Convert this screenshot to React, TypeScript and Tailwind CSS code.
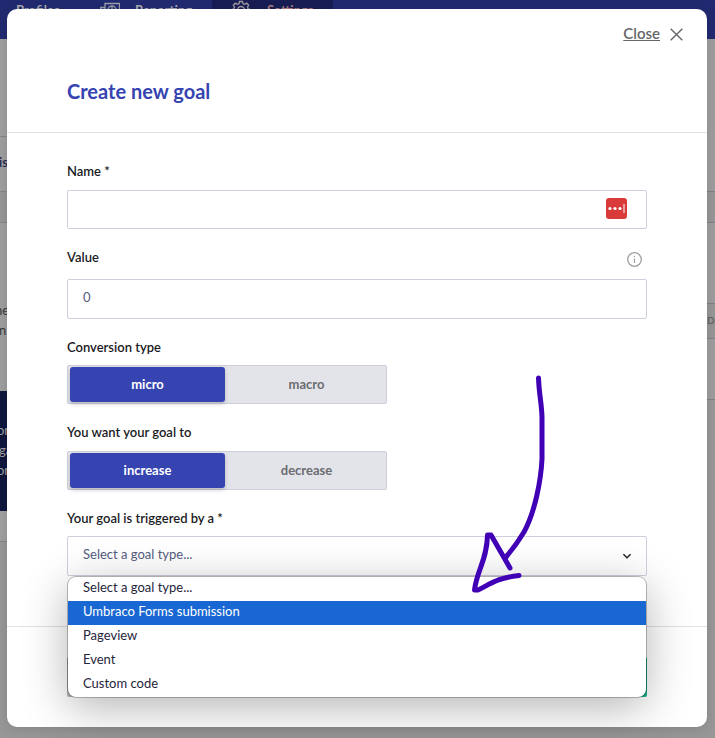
import React from "react";

const options = ["Select a goal type...", "Umbraco Forms submission", "Pageview", "Event", "Custom code"];

function Label({ children }: { children: React.ReactNode }) {
  return <span className="text-[13px] leading-5 font-semibold text-[#1b1b1f]">{children}</span>;
}

function Toggle({ on, off }: { on: string; off: string }) {
  return (
    <div className="flex h-[39px] w-80 shrink-0 rounded-[2px] border border-[#cfcfdc] bg-[#e3e4e9] p-px text-[13px] font-bold">
      <div className="ml-px flex w-[155px] items-center justify-center rounded-[3px] bg-[#3544b1] text-white shadow-[0_2px_4px_rgba(0,0,0,0.2)]">
        {on}
      </div>
      <div className="flex flex-1 items-center justify-center pl-[3px] text-[#6c6c70]">{off}</div>
    </div>
  );
}

function Backdrop() {
  return (
    <div className="h-full w-full bg-[#979797]">
      <div className="flex h-[39px] bg-[#212a70] text-[13px] leading-5 font-bold text-[#a8a8b0]">
        <span className="ml-4 w-[84px]">Profiles</span>
        <svg className="h-5 w-5" viewBox="0 0 20 20" fill="none" stroke="#9b9da9" strokeWidth="1.3">
          <path d="M5 13V3.500H19.500V15M.7 14V7.500H5" />
          <circle cx="12" cy="10" r="4" />
          <path d="M12 6v4h4" />
        </svg>
        <span className="ml-[15px] w-[77px]">Reporting</span>
        <div className="flex w-[121px] bg-[#181e53] text-[#b07c80]">
          <svg className="ml-5 h-5 w-[18px]" viewBox="0 0 18 20" fill="none" stroke="#a09ba3" strokeWidth="1.3">
            <path d="M7.500 1.500h3l.5 2.200 1.800.7 1.900-1.200 2 2-1.200 1.900.7 1.800 1.300.4v3h-17v-3l1.300-.4.700-1.800-1.200-1.900 2-2 1.900 1.200 1.800-.7z" />
            <circle cx="9" cy="10" r="3.500" />
          </svg>
          <span className="ml-[17px]">Settings</span>
        </div>
      </div>
      <div className="flex h-[699px] justify-between">
        <div className="flex w-[7px] flex-col text-[13px] leading-5 whitespace-nowrap text-[#393939]">
          <div className="h-[97px] w-full bg-[#9f9f9f]" />
          <div className="flex h-[55px] w-full items-center border-t border-[#83838b] bg-[#9e9e9e] pb-1 font-semibold text-[#22264e]">
            <span className="-ml-px">is</span>
          </div>
          <div className="h-8 w-full border-y border-[#83838b] bg-[#969696]" />
          <div className="flex h-[168px] w-full flex-col bg-[#9e9e9e] pt-[77px]">
            <span className="-ml-[5px]">ne</span>
            <span className="-ml-px">n</span>
          </div>
          <div className="flex h-[120px] w-full flex-col bg-[#10173d] pt-[29px] text-[#a0a0a0]">
            <span className="-ml-[3px]">or</span>
            <span className="-ml-px">ga</span>
            <span className="-ml-[3px]">or</span>
          </div>
          <div className="h-[31px] w-full border-b border-[#858585] bg-[#a0a0a0]" />
        </div>
        <div className="flex w-2 flex-col text-[10px] font-bold text-[#676767]">
          <div className="h-[152px] bg-[#9d9d9d]" />
          <div className="h-8 border-y border-[#7e7e84] bg-[#969696]" />
          <div className="h-20 bg-[#9d9d9d]" />
          <div className="flex h-9 items-center border-y border-[#7e7e84] bg-[#969696] pb-0.5">DA</div>
          <div className="h-[61px] border-b border-[#808080] bg-[#9d9d9d]" />
        </div>
      </div>
    </div>
  );
}

function GoalDialog() {
  return (
    <div className="absolute top-[9px] left-[7px] flex h-[718px] w-[700px] flex-col rounded-[10px] bg-white shadow-[0_2px_12px_rgba(0,0,0,0.12)]">
      <header className="flex h-[124px] shrink-0 flex-col border-b border-[#e2e2e4]">
        <div className="flex h-[50px] items-center justify-end gap-[10px] pr-6 pb-0.5 text-[#65656a]">
          <span className="text-[15px] leading-5 font-semibold underline">Close</span>
          <svg className="mt-[3px] h-[13px] w-[13px]" viewBox="0 0 13 13" fill="none" stroke="currentColor" strokeWidth="1.4">
            <path d="M.7.7l11.600 11.600M12.300.7L.7 12.300" />
          </svg>
        </div>
        <h1 className="mt-[17px] ml-[60px] text-[20px] leading-[30px] font-bold text-[#3544b1]">Create new goal</h1>
      </header>
      <main className="flex h-[493px] shrink-0 flex-col px-[60px] pt-[28px]">
        <Label>Name *</Label>
        <div className="mt-[9px] flex h-[39px] shrink-0 items-center justify-end rounded-[2px] border border-[#cfcfdd] pr-[19.5px] pb-0.5">
          <svg className="h-[21px] w-[21px]" viewBox="0 0 21 21">
            <rect width="21" height="21" rx="3" fill="#d93b3a" />
            <g fill="white">
              <circle cx="4" cy="10.500" r="1.600" />
              <circle cx="9" cy="10.500" r="1.600" />
              <circle cx="14" cy="10.500" r="1.600" />
              <rect x="17.500" y="6" width="1" height="9" />
            </g>
          </svg>
        </div>
        <div className="mt-[18px] flex h-5 shrink-0 justify-between pr-[5px]">
          <Label>Value</Label>
          <svg className="mt-[5px] h-[15px] w-[15px]" viewBox="0 0 15 15" fill="none" stroke="#a0a0a0" strokeWidth="1.300">
            <circle cx="7.500" cy="7.500" r="6.800" />
            <path d="M7.500 6.600v4.500M7.500 3.800v1.300" />
          </svg>
        </div>
        <div className="mt-3 flex h-10 shrink-0 items-center rounded-[2px] border border-[#cfcfdd] pb-0.5 pl-[15px] text-[13px] text-[#555b80]">0</div>
        <div className="mt-[18px] mb-2 flex h-5"><Label>Conversion type</Label></div>
        <Toggle on="micro" off="macro" />
        <div className="mt-[18px] mb-[9px] flex h-5"><Label>You want your goal to</Label></div>
        <Toggle on="increase" off="decrease" />
        <div className="mt-[18px] mb-2 flex h-5"><Label>Your goal is triggered by a *</Label></div>
        <div className="relative flex h-10 shrink-0 items-center justify-between rounded-[2px] border border-[#cfcfdd] pr-[15px] pl-[15px] text-[13px] text-[#555b80]">
          <span className="-mt-0.5">Select a goal type...</span>
          <svg className="h-2 w-2" viewBox="0 0 8 8" fill="none" stroke="#222" strokeWidth="1.500">
            <path d="M.4 2.200L4 5.800l3.600-3.600" />
          </svg>
          <ul className="absolute top-10 left-0 h-[120px] w-[578px] overflow-hidden rounded-[8px] bg-white text-[#25253b] shadow-[0_0_0_1px_rgba(0,0,0,0.25),0_10px_45px_rgba(0,0,0,0.3)]">
            {options.map((option, i) => (
              <li key={option} className={i === 1 ? "h-6 bg-[#1967d2] pl-[15px] leading-[21px] text-white" : "h-6 pl-[15px] leading-[21px]"}>
                {option}
              </li>
            ))}
          </ul>
        </div>
      </main>
      <footer className="flex flex-1 items-start justify-between border-t border-[#e2e2e4] px-[60px] pt-[30px]">
        <div className="h-10 w-32 rounded-[2px] bg-[#b5b5ba]" />
        <div className="h-10 w-32 rounded-[2px] bg-[#1cb08d]" />
      </footer>
    </div>
  );
}

export default function App() {
  return (
    <div className="relative h-[738px] w-[715px] overflow-hidden font-['Lato',sans-serif]">
      <Backdrop />
      <GoalDialog />
      <svg className="absolute top-[370px] left-[465px] h-[230px] w-[90px]" viewBox="465 370 90 230" fill="none" stroke="#4000b5" strokeWidth="5" strokeLinecap="round" strokeLinejoin="round">
        <path d="M538.500 378C539 394 541.500 402 542 417V459C541 480 535 512 524 532C518 542 512 550 506 557" />
        <path d="M510 568L491 535H487.500C487 560 477 570 474.500 590H478C489 585 496 578 519 575.500" />
      </svg>
    </div>
  );
}
